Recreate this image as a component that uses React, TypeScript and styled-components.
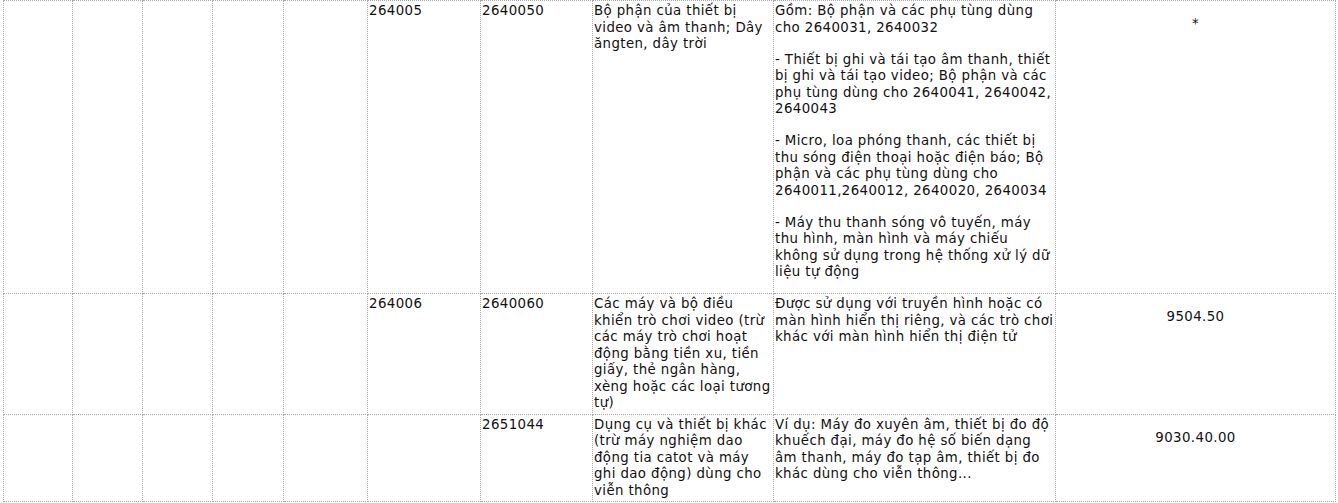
import * as React from 'react';
import styled, { createGlobalStyle } from 'styled-components';

const GlobalStyle = createGlobalStyle`
  html, body {
    margin: 0;
    padding: 0;
    background: #ffffff;
  }
`;

const Page = styled.div`
  padding: 0 0 0 3px;
  font-family: "DejaVu Sans", Verdana, sans-serif;
  font-size: 13.33px;
  letter-spacing: 0.4px;
  line-height: 16.5px;
  color: #111111;
`;

const Table = styled.table`
  border-collapse: collapse;
  table-layout: fixed;
  width: 1332px;
`;

const Cell = styled.td<{ $center?: boolean }>`
  border: 1px dotted #a8a8a8;
  padding: 2px 1px;
  vertical-align: top;
  text-align: ${({ $center }) => ($center ? 'center' : 'left')};
  word-wrap: break-word;
`;

const Para = styled.p<{ $spaced?: boolean }>`
  margin: ${({ $spaced }) => ($spaced ? '13px 0' : '0 0 15.5px')};

  &:last-child {
    margin-bottom: 0;
  }
`;

const widths = [69, 70, 70, 71, 84, 113, 112, 181, 282, 280];

type Row = {
  group: string;
  code: string;
  name: string;
  notes: string[];
  ref: string;
};

const rows: Row[] = [
  {
    group: '264005',
    code: '2640050',
    name: 'Bộ phận của thiết bị video và âm thanh; Dây ăngten, dây trời',
    notes: [
      'Gồm: Bộ phận và các phụ tùng dùng cho 2640031, 2640032',
      '- Thiết bị ghi và tái tạo âm thanh, thiết bị ghi và tái tạo video; Bộ phận và các phụ tùng dùng cho 2640041, 2640042, 2640043',
      '- Micro, loa phóng thanh, các thiết bị thu sóng điện thoại hoặc điện báo; Bộ phận và các phụ tùng dùng cho 2640011,2640012, 2640020, 2640034',
      '- Máy thu thanh sóng vô tuyến, máy thu hình, màn hình và máy chiếu không sử dụng trong hệ thống xử lý dữ liệu tự động',
    ],
    ref: '*',
  },
  {
    group: '264006',
    code: '2640060',
    name: 'Các máy và bộ điều khiển trò chơi video (trừ các máy trò chơi hoạt động bằng tiền xu, tiền giấy, thẻ ngân hàng, xèng hoặc các loại tương tự)',
    notes: [
      'Được sử dụng với truyền hình hoặc có màn hình hiển thị riêng, và các trò chơi khác với màn hình hiển thị điện tử',
    ],
    ref: '9504.50',
  },
  {
    group: '',
    code: '2651044',
    name: 'Dụng cụ và thiết bị khác (trừ máy nghiệm dao động tia catot và máy ghi dao động) dùng cho viễn thông',
    notes: [
      'Ví dụ: Máy đo xuyên âm, thiết bị đo độ khuếch đại, máy đo hệ số biến dạng âm thanh, máy đo tạp âm, thiết bị đo khác dùng cho viễn thông...',
    ],
    ref: '9030.40.00',
  },
];

const rowHeights = [293, 118, 86];

export default function App() {
  return (
    <Page>
      <GlobalStyle />
      <Table>
        <colgroup>
          {widths.map((w, i) => (
            <col key={i} style={{ width: w }} />
          ))}
        </colgroup>
        <tbody>
          {rows.map((row, i) => (
            <tr key={row.code} style={{ height: rowHeights[i] }}>
              <Cell />
              <Cell />
              <Cell />
              <Cell />
              <Cell />
              <Cell>{row.group}</Cell>
              <Cell>{row.code}</Cell>
              <Cell>{row.name}</Cell>
              <Cell>
                {row.notes.map((n, j) => (
                  <Para key={j}>{n}</Para>
                ))}
              </Cell>
              <Cell $center>
                <Para $spaced>{row.ref}</Para>
              </Cell>
            </tr>
          ))}
        </tbody>
      </Table>
    </Page>
  );
}
